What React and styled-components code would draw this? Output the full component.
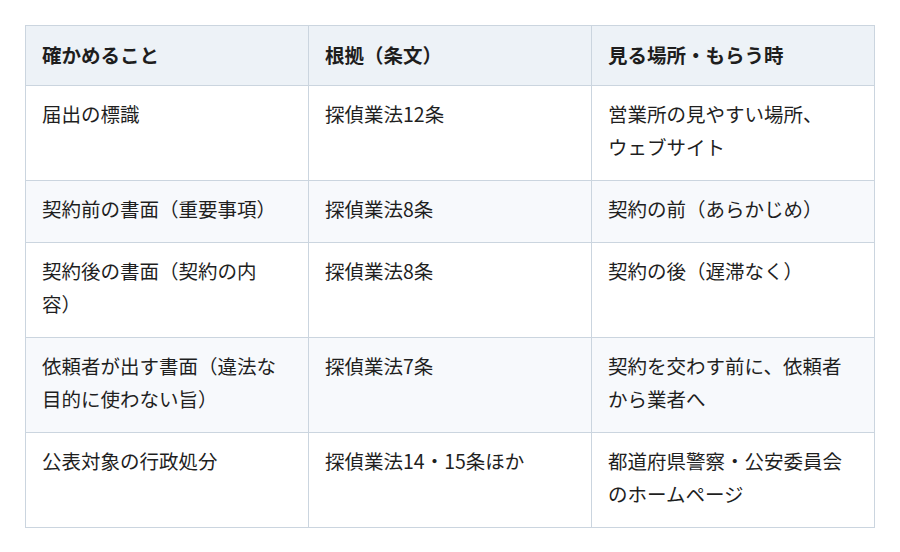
import React from "react";
import styled, { createGlobalStyle } from "styled-components";

const GlobalStyle = createGlobalStyle`
  body {
    margin: 0;
    background: #ffffff;
    font-family: "Noto Sans CJK JP", "Noto Sans", sans-serif;
    color: #222222;
  }
`;

const Page = styled.div`
  padding: 25px 25px;
`;

const Table = styled.table`
  width: 850px;
  border-collapse: collapse;
  table-layout: fixed;
  font-size: 19.5px;
  line-height: 33px;
`;

const HeadCell = styled.th`
  background: #edf2f7;
  border: 1px solid #cbd5df;
  padding: 12px 15px 14px 16px;
  text-align: left;
  font-weight: 700;
  color: #1e1e1e;
  vertical-align: middle;
`;

const Row = styled.tr`
  background: ${(p) => (p.$striped ? "#f7f9fc" : "#ffffff")};
`;

const Cell = styled.td`
  border: 1px solid #cbd5df;
  padding: 11px 15px 17px 16px;
  vertical-align: top;
  color: #1f1f1f;
`;

// 折り返し位置は元の表に合わせて固定
const rows = [
  ["届出の標識", "探偵業法12条", ["営業所の見やすい場所、", "ウェブサイト"]],
  ["契約前の書面（重要事項）", "探偵業法8条", "契約の前（あらかじめ）"],
  [["契約後の書面（契約の内", "容）"], "探偵業法8条", "契約の後（遅滞なく）"],
  [
    ["依頼者が出す書面（違法な", "目的に使わない旨）"],
    "探偵業法7条",
    ["契約を交わす前に、依頼者", "から業者へ"],
  ],
  [
    "公表対象の行政処分",
    "探偵業法14・15条ほか",
    ["都道府県警察・公安委員会", "のホームページ"],
  ],
];

function renderText(t) {
  if (Array.isArray(t)) {
    return t.map((line, i) => (
      <React.Fragment key={i}>
        {line}
        {i < t.length - 1 && <br />}
      </React.Fragment>
    ));
  }
  return t;
}

export default function App() {
  return (
    <Page>
      <GlobalStyle />
      <Table>
        <thead>
          <tr>
            <HeadCell>確かめること</HeadCell>
            <HeadCell>根拠（条文）</HeadCell>
            <HeadCell>見る場所・もらう時</HeadCell>
          </tr>
        </thead>
        <tbody>
          {rows.map((r, i) => (
            <Row key={i} $striped={i % 2 === 1}>
              {r.map((c, j) => (
                <Cell key={j}>{renderText(c)}</Cell>
              ))}
            </Row>
          ))}
        </tbody>
      </Table>
    </Page>
  );
}
